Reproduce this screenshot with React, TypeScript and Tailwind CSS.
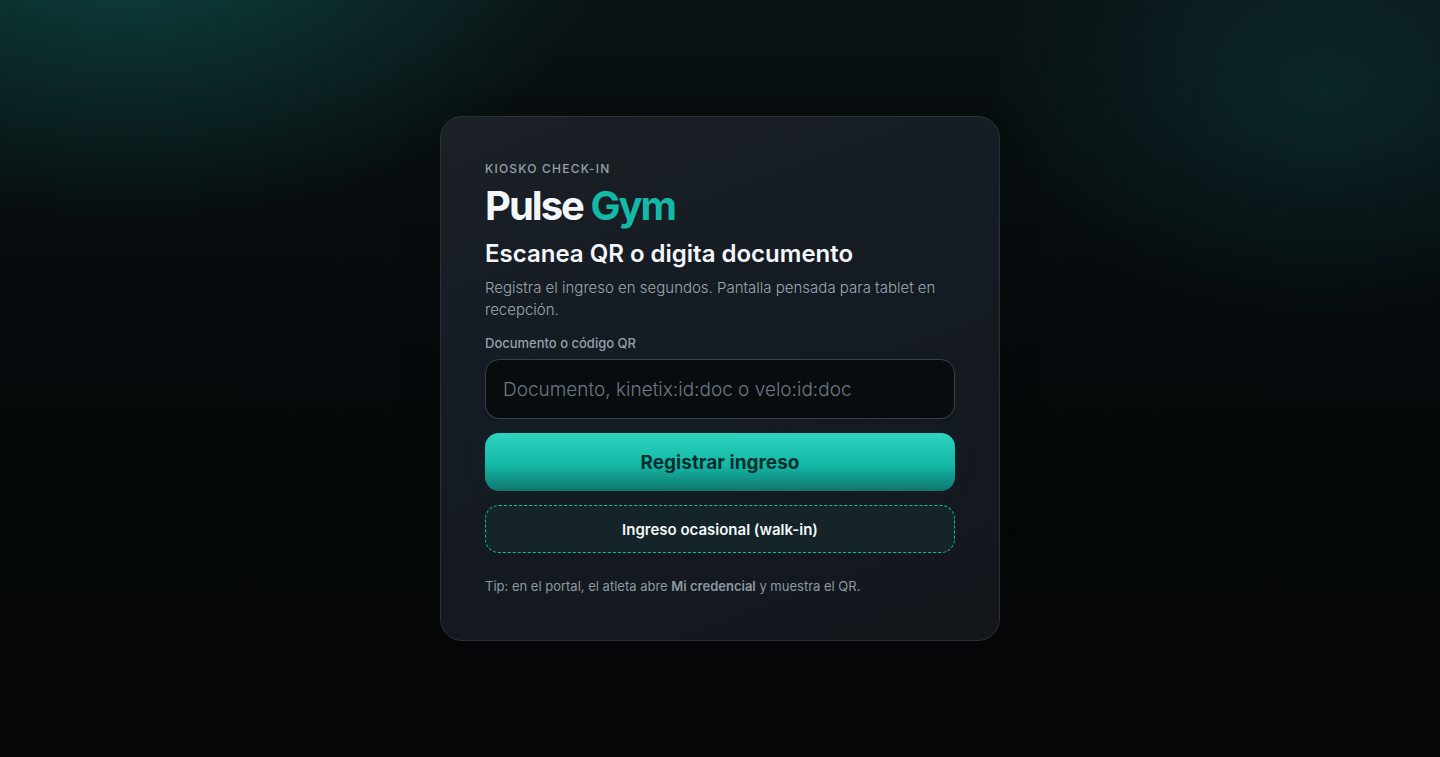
import { useState } from "react";

function Backdrop() {
  return (
    <div
      aria-hidden="true"
      className="pointer-events-none absolute inset-0 bg-[radial-gradient(800px_500px_at_9%_-10%,rgba(20,184,166,0.3),transparent_60%),radial-gradient(600px_410px_at_92%_12%,rgba(20,170,166,0.15),transparent_56%),linear-gradient(180deg,#0a1214_0%,#070b0d_35%,#040809_60%,#050607_100%)]"
    >
      <div className="h-full w-full bg-[linear-gradient(rgba(255,255,255,0.012)_1px,transparent_1px),linear-gradient(90deg,rgba(255,255,255,0.012)_1px,transparent_1px)] bg-[size:48px_48px] [mask-image:radial-gradient(ellipse_at_center,black_20%,transparent_70%)]" />
    </div>
  );
}

export default function App() {
  const [code, setCode] = useState("");

  return (
    <main className="relative flex min-h-screen items-center justify-center bg-[#050607] px-4 py-10 font-['Inter','Liberation_Sans',sans-serif] text-[#f4f7fa]">
      <Backdrop />
      <section className="relative w-full max-w-[560px] rounded-[22px] border border-[#2a3138] bg-[linear-gradient(160deg,#1a2026_0%,#151b22_45%,#14181f_80%,#13171b_100%)] p-11 shadow-[0_16px_48px_rgba(0,0,0,0.1)]">
        <p className="text-xs leading-4 font-medium tracking-widest text-[#94a1ab] uppercase">
          Kiosko check-in
        </p>
        <h1 className="mt-[7px] text-[40px] leading-11 font-bold tracking-tighter">
          Pulse <span className="text-[#14b8a6]">Gym</span>
        </h1>
        <h2 className="mt-[11px] text-2xl leading-[30px] font-semibold">
          Escanea QR o digita documento
        </h2>
        <p className="mt-2 text-[15px] leading-[22px] font-light text-[#9aa7b1]">
          Registra el ingreso en segundos. Pantalla pensada para tablet en recepción.
        </p>
        <form className="mt-[13px] flex flex-col" onSubmit={(e) => e.preventDefault()}>
          <label htmlFor="code" className="text-[13px] leading-[18px] font-medium text-[#94a1ab]">
            Documento o código QR
          </label>
          <input
            id="code"
            type="text"
            autoComplete="off"
            value={code}
            onChange={(e) => setCode(e.target.value)}
            placeholder="Documento, kinetix:id:doc o velo:id:doc"
            className="mt-[7px] h-[60px] rounded-[14px] border border-[#38414a] bg-[#080c0f] px-[17px] text-[19px] font-light outline-none placeholder:text-[#6c7882] focus:border-[#14b8a6]"
          />
          <button
            type="submit"
            className="mt-3.5 h-[58px] rounded-[14px] bg-[linear-gradient(180deg,#2dd4bf_0%,#14b8a6_55%,#0f766e_100%)] pt-0.5 text-[19px] font-bold text-[#042f2e] shadow-[0_0_24px_rgba(20,184,166,0.05)]"
          >
            Registrar ingreso
          </button>
          <button
            type="button"
            className="mt-3.5 h-12 rounded-[14px] border border-dashed border-[#14b8a6] bg-[#142428] pt-0.5 text-[15px] font-semibold"
          >
            Ingreso ocasional (walk-in)
          </button>
        </form>
        <p className="mt-[23px] text-[13px] leading-5 text-[#8c99a3]">
          Tip: en el portal, el atleta abre <strong className="font-semibold">Mi credencial</strong> y
          muestra el QR.
        </p>
      </section>
    </main>
  );
}
